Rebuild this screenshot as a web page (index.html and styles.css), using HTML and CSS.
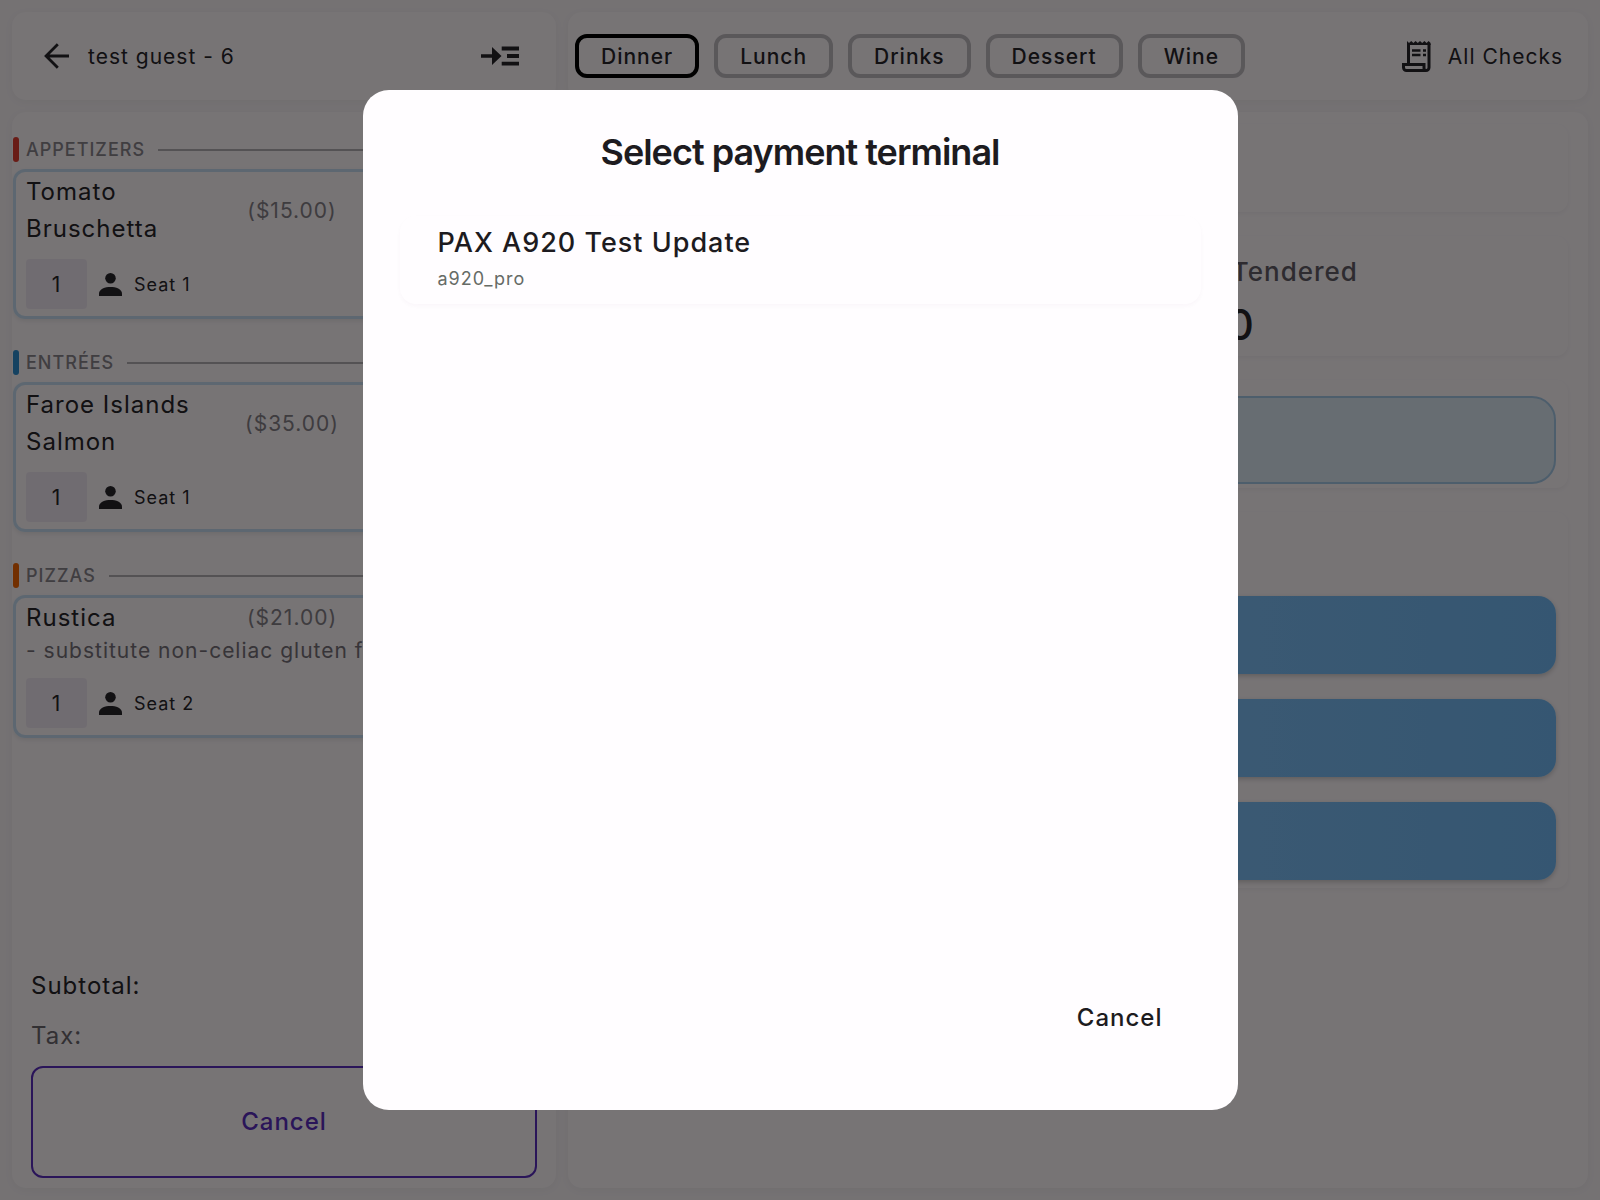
FILE: index.html
```
<!DOCTYPE html>
<html lang="en">
<head>
    <meta charset="UTF-8">
    <meta name="viewport" content="width=device-width, initial-scale=1.0">
    <title>Select payment terminal</title>
    <link rel="stylesheet" href="styles.css">
</head>
<body>
    <div class="app">
        <!-- Check column -->
        <aside class="column">
            <header class="panel top-bar check-bar">
                <button class="icon-button" type="button" aria-label="Back">
                    <svg width="32" height="32" viewBox="0 0 24 24" fill="none" stroke="currentColor" stroke-width="2.1">
                        <path d="M21 12H3.500M12.600 3.200 3.800 12l8.800 8.800"/>
                    </svg>
                </button>
                <h1 class="guest-name">test guest - 6</h1>
                <button class="icon-button" type="button" aria-label="Send to check">
                    <svg width="38" height="20" viewBox="0 0 38 20" fill="currentColor">
                        <path d="M0 8.200h11V1L20.500 10 11 19v-7.200H0zM20.700 0.500H38v3.900H20.700zM26 8.100h12v3.900H26zM20.700 15.700H38v3.900H20.700z"/>
                    </svg>
                </button>
            </header>

            <section class="panel check">
                <div class="course-list">
                    <section class="course">
                        <h2 class="course-title course-red">APPETIZERS</h2>
                        <article class="item">
                            <div class="item-row">
                                <span class="item-name">Tomato Bruschetta</span>
                                <span class="item-price">($15.00)</span>
                            </div>
                            <div class="item-meta">
                                <button class="qty" type="button">1</button>
                                <svg class="person" viewBox="0 0 24 24"><circle cx="12" cy="5.500" r="5.500"/><path d="M0 24v-2.500C0 16.500 6.500 14.500 12 14.500s12 2 12 7V24z"/></svg>
                                <span>Seat 1</span>
                            </div>
                        </article>
                    </section>

                    <section class="course">
                        <h2 class="course-title course-blue">ENTRÉES</h2>
                        <article class="item">
                            <div class="item-row">
                                <span class="item-name">Faroe Islands Salmon</span>
                                <span class="item-price">($35.00)</span>
                            </div>
                            <div class="item-meta">
                                <button class="qty" type="button">1</button>
                                <svg class="person" viewBox="0 0 24 24"><circle cx="12" cy="5.500" r="5.500"/><path d="M0 24v-2.500C0 16.500 6.500 14.500 12 14.500s12 2 12 7V24z"/></svg>
                                <span>Seat 1</span>
                            </div>
                        </article>
                    </section>

                    <section class="course">
                        <h2 class="course-title course-orange">PIZZAS</h2>
                        <article class="item">
                            <div class="item-row">
                                <span class="item-name">Rustica</span>
                                <span class="item-price">($21.00)</span>
                            </div>
                            <p class="item-note">- substitute non-celiac gluten free</p>
                            <div class="item-meta">
                                <button class="qty" type="button">1</button>
                                <svg class="person" viewBox="0 0 24 24"><circle cx="12" cy="5.500" r="5.500"/><path d="M0 24v-2.500C0 16.500 6.500 14.500 12 14.500s12 2 12 7V24z"/></svg>
                                <span>Seat 2</span>
                            </div>
                        </article>
                    </section>
                </div>

                <footer class="totals">
                    <p class="subtotal">Subtotal:</p>
                    <p class="tax">Tax:</p>
                    <button class="outline-button" type="button">Cancel</button>
                </footer>
            </section>
        </aside>

        <!-- Payment column -->
        <main class="column">
            <header class="panel top-bar menu-bar">
                <nav class="menus">
                    <button class="menu-pill active" type="button">Dinner</button>
                    <button class="menu-pill" type="button">Lunch</button>
                    <button class="menu-pill" type="button">Drinks</button>
                    <button class="menu-pill" type="button">Dessert</button>
                    <button class="menu-pill" type="button">Wine</button>
                </nav>
                <button class="all-checks" type="button">
                    <svg width="29" height="31" viewBox="0 0 29 31" fill="none" stroke="currentColor" stroke-width="3">
                        <path d="M6.500 22V3M27 3v23.500a3 3 0 0 1-3 3H4.500a3 3 0 0 1-3-3V23.500H22V27a2.300 2.300 0 0 0 2.300 2.500"/>
                        <path d="M5 0l2 2 2.200-2 2.200 2 2.200-2 2.200 2 2.200-2 2.200 2 2.200-2 2.200 2 2-2 2 2V4H5z" fill="currentColor" stroke="none"/>
                        <path d="M10 9.500h8.500M10 14h8.500M21 9.500h3M21 14h3" stroke-width="2.500"/>
                    </svg>
                    All Checks
                </button>
            </header>

            <section class="panel payment">
                <div class="card card-summary"></div>
                <div class="card card-tendered">
                    <p class="tendered-label">Check Amount Tendered</p>
                    <p class="tendered-value">$0.00</p>
                </div>
                <div class="card card-amount">
                    <div class="amount-box"></div>
                </div>
                <div class="card card-methods">
                    <button class="method" type="button" aria-label="Cash"></button>
                    <button class="method" type="button" aria-label="Credit card"></button>
                    <button class="method" type="button" aria-label="Gift card"></button>
                </div>
            </section>
        </main>
    </div>

    <!-- Terminal picker -->
    <div class="backdrop">
        <dialog class="picker" open aria-labelledby="picker-title">
            <h2 class="picker-title" id="picker-title">Select payment terminal</h2>
            <button class="terminal" type="button">
                <span class="terminal-name">PAX A920 Test Update</span>
                <span class="terminal-model">a920_pro</span>
            </button>
            <div class="picker-actions">
                <button class="text-button" type="button">Cancel</button>
            </div>
        </dialog>
    </div>
</body>
</html>
```
FILE: styles.css
```
* {
    margin: 0;
    padding: 0;
    box-sizing: border-box;
}

body {
    font-family: "Inter", "Roboto", sans-serif;
    font-size: 21px;
    letter-spacing: 1px;
    color: #27242a;
    background: #f8f2f5;
    height: 100vh;
    overflow: hidden;
}

button {
    font: inherit;
    letter-spacing: inherit;
    color: inherit;
    background: none;
    border: none;
    cursor: pointer;
}

svg {
    display: block;
}

.app {
    display: grid;
    grid-template-columns: 8fr 15fr;
    gap: 12px;
    height: 100vh;
    padding: 12px;
}

.column {
    display: flex;
    flex-direction: column;
    gap: 12px;
    min-width: 0;
}

.panel {
    background: #fcf6f9;
    border-radius: 14px;
    box-shadow: 0 2px 10px rgba(0, 0, 0, 0.04);
}

.top-bar {
    display: flex;
    align-items: center;
    height: 88px;
}

/* Check header */
.check-bar {
    padding: 0 37px 0 29px;
    gap: 15px;
}

.guest-name {
    flex: 1;
    font-size: 21px;
    font-weight: 400;
}

/* Courses and items */
.check {
    flex: 1;
    display: flex;
    flex-direction: column;
    overflow: hidden;
}

.course-list {
    flex: 1;
    display: flex;
    flex-direction: column;
    gap: 31px;
    padding: 25px 0 0 1px;
}

.course-title {
    display: flex;
    align-items: center;
    gap: 7px;
    height: 25px;
    margin-bottom: 7px;
    font-size: 18px;
    font-weight: 500;
    color: #89848b;
}

.course-title::before {
    content: "";
    width: 6px;
    height: 25px;
    border-radius: 3px;
    background: currentColor;
}

.course-title::after {
    content: "";
    flex: 1;
    height: 2px;
    margin-left: 6px;
    background: #b3aeb3;
}

.course-red::before {
    background: #e03c30;
}

.course-blue::before {
    background: #2d8ccf;
}

.course-orange::before {
    background: #f26400;
}

.item {
    padding: 1px 10px 7px;
    border: 3px solid #c6dcf0;
    border-radius: 12px;
    box-shadow: 0 2px 4px rgba(0, 0, 0, 0.08);
}

.item-row {
    display: flex;
    align-items: center;
}

.item-name {
    width: 200px;
    font-size: 24px;
    line-height: 37px;
}

.item-price {
    width: 132px;
    text-align: center;
    color: #858087;
}

.item-note {
    line-height: 30px;
    white-space: nowrap;
    color: #757077;
}

.item-meta {
    display: flex;
    align-items: center;
    gap: 12px;
    margin-top: 12px;
    font-size: 18px;
}

.qty {
    width: 61px;
    height: 50px;
    border-radius: 4px;
    font-size: 21px;
    background: #efe6f0;
}

.person {
    width: 23px;
    height: 23px;
    fill: currentColor;
}

/* Totals */
.totals {
    padding: 0 19px 10px;
    font-size: 24px;
    line-height: 50px;
}

.tax {
    color: #6b666d;
}

.outline-button {
    display: block;
    width: 100%;
    height: 112px;
    margin-top: 5px;
    border: 2px solid #5a2dbd;
    border-radius: 12px;
    color: #5a2dbd;
    font-weight: 500;
}

/* Menu header */
.menu-bar {
    justify-content: space-between;
    padding: 0 25px 0 7px;
}

.menus {
    display: flex;
    gap: 15px;
}

.menu-pill {
    height: 44px;
    padding: 0 22px;
    border: 4px solid #c0bbc0;
    border-radius: 12px;
    font-weight: 500;
}

.menu-pill.active {
    border-color: #000;
}

.all-checks {
    display: flex;
    align-items: center;
    gap: 17px;
}

/* Payment panel */
.payment {
    flex: 1;
    padding: 12px 20px;
}

.card {
    border-radius: 12px;
    box-shadow: 0 2px 4px rgba(0, 0, 0, 0.04);
}

.card-summary {
    height: 88px;
}

.card-tendered {
    margin-top: 24px;
    padding: 18px 0 2px 230px;
    text-align: center;
}

.tendered-label {
    font-size: 26px;
    font-weight: 500;
    line-height: 36px;
    color: #625d66;
}

.tendered-value {
    padding-top: 6px;
    font-size: 42px;
    font-weight: 500;
    line-height: 58px;
}

.card-amount {
    margin-top: 24px;
    padding: 16px 12px 4px;
}

.amount-box {
    height: 88px;
    border: 2px solid #a5c8e6;
    border-radius: 24px;
    background: #dce8f3;
}

.card-methods {
    display: flex;
    flex-direction: column;
    gap: 25px;
    margin-top: 24px;
    padding: 84px 12px 8px;
}

.method {
    height: 78px;
    border-radius: 18px;
    background: linear-gradient(90deg, #90c8f8, #72b8f2);
    box-shadow: 0 2px 5px rgba(0, 0, 0, 0.2);
}

/* Terminal picker */
.backdrop {
    position: fixed;
    inset: 0;
    display: flex;
    align-items: center;
    justify-content: center;
    background: rgba(0, 0, 0, 0.53);
}

.picker {
    position: static;
    display: flex;
    flex-direction: column;
    width: 100%;
    max-width: 875px;
    height: 85vh;
    padding: 36px 37px;
    border: none;
    border-radius: 26px;
    color: #1d1b20;
    background: #fffdff;
}

.picker-title {
    font-size: 36px;
    font-weight: 600;
    line-height: 52px;
    letter-spacing: -1px;
    text-align: center;
}

.terminal {
    display: flex;
    flex-direction: column;
    margin-top: 38px;
    padding: 8px 38px 8px;
    border-radius: 16px;
    text-align: left;
    box-shadow: 0 2px 4px rgba(80, 0, 80, 0.03);
}

.terminal-name {
    font-size: 27px;
    font-weight: 500;
    line-height: 38px;
}

.terminal-model {
    font-size: 18px;
    line-height: 34px;
    color: #666b66;
}

.picker-actions {
    display: flex;
    justify-content: flex-end;
    margin-top: auto;
    padding: 0 38px 36px 0;
}

.text-button {
    font-size: 24px;
    font-weight: 500;
    line-height: 40px;
}
```
